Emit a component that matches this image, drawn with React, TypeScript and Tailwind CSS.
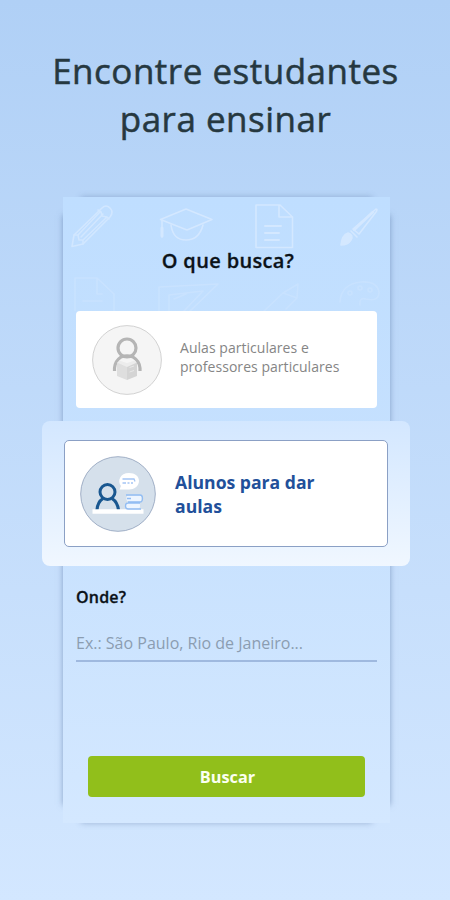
import type { ReactNode } from 'react';

function Doodles() {
  return (
    <svg
      className="absolute top-0 left-0 h-[114px] w-[327px]"
      viewBox="63 197 327 114"
      fill="none"
      stroke="#d8eaff"
      strokeWidth="1.6"
      strokeLinecap="round"
      strokeLinejoin="round"
    >
      {/* pencil */}
      <g opacity="0.75">
        <path d="M72 246.500L74 235L102 208Q106 204 110 208Q114 212 110 217L83 244Z" />
        <path d="M74 235L78 235L79 240L83 240V244M78 235L100 212M83 240L107 217M98 210L101 212L102 216L107 217L109 219M81 237L103 214" />
      </g>
      {/* graduation cap */}
      <g opacity="0.85">
        <path d="M160.500 219.500L186 209L212 219.500L187 230Z" />
        <path d="M171 225Q173 240 186 240Q199 240 203 225M162 220V237" />
        <path d="M162 228V236" strokeWidth="3" />
      </g>
      {/* document */}
      <g opacity="0.85">
        <path d="M256 205H280L292.500 217V247.500H256ZM279 205V217H292" />
        <path d="M265 226H281M265 233H279M265 240H279" strokeWidth="2" />
      </g>
      {/* brush */}
      <g opacity="0.85">
        <path d="M353 229L376 209Q378 209 376 212L359 234Z" />
        <path d="M354 230L373 212" strokeWidth="2.500" />
        <path d="M341 245Q342 235 348 233Q354 235 351 240Q348 245 341 245Z" fill="#d8eaff" />
        <path d="M351 231L357 237" />
      </g>
      <g opacity="0.35">
        <path d="M75 311V278H97L114 294V311M97 278V294H102M83 301H102" />
        <path d="M159 311V287L218 284L190 311M169 311V295L203 291L184 311M174 299L186 294" />
      </g>
      <g opacity="0.3">
        <path d="M264 311L283 293L298 284L297 298L286 309M283 293L297 298" />
        <path d="M340 302Q341 284 361 282Q377 281 379 292Q379 302 366 299Q359 297 360 305" />
        <circle cx="350" cy="293" r="2" />
        <circle cx="360" cy="288" r="2" />
        <circle cx="370" cy="290" r="2" />
      </g>
    </svg>
  );
}

function ReaderIcon() {
  return (
    <svg className="h-[70px] w-[70px] shrink-0" viewBox="0 0 70 70" fill="none">
      <circle cx="35" cy="35" r="34.400" fill="#f5f5f5" stroke="#d2d2d2" />
      <circle cx="35" cy="23" r="9" stroke="#b5b5b5" strokeWidth="3.200" />
      <path
        d="M22.500 46V43Q23 36 29 32Q35 29.500 41 32Q47.500 36 48 43V46"
        stroke="#b5b5b5"
        strokeWidth="3.200"
      />
      <path d="M25 37L35 41V55L25 51Z" fill="#dedede" />
      <path d="M45 37L35 41V55L45 51Z" fill="#d4d4d4" />
      <path d="M27 35.500L35 38L43 35.500L44 38L35 42L26 38Z" fill="#ececec" />
      <path d="M37.500 42.500L42 41M37.500 47L42 45.500" stroke="#e8e8e8" />
    </svg>
  );
}

function TutorIcon() {
  return (
    <svg className="h-[76px] w-[76px] shrink-0" viewBox="0 0 76 76" fill="none">
      <circle cx="38" cy="38" r="37.300" fill="#d5e0eb" stroke="#a0afc6" />
      <circle cx="27.500" cy="36" r="7.500" stroke="#195790" strokeWidth="3" />
      <path
        d="M17 54Q17.500 46 23 42.500M38.500 54Q37.500 46 32 42.500"
        stroke="#195790"
        strokeWidth="3.200"
      />
      <path d="M12.500 55.500H63.500" stroke="#fff" strokeWidth="4.400" />
      <path
        d="M49 17C55 17 59 20 59 25C59 30 54 33.500 49 33.500H39.500L41 30C37 25 40 17 49 17Z"
        fill="#fff"
      />
      <path d="M42.500 23H54L55 25.500M42.500 27H46M47.500 27H49.500M51 27H53" stroke="#a4c5f5" strokeWidth="1.300" />
      <rect x="46.500" y="39.500" width="15" height="6" rx="2" fill="#edf5ff" />
      <rect x="46" y="46.500" width="14" height="6" rx="2" fill="#edf5ff" />
      <path
        d="M46 39H60Q62.500 39 62.500 42.500Q62.500 46 60 46H48M60 47H48Q45.500 47 45.500 50Q45.500 53 48 53H61M47 42.500H51"
        stroke="#92bdf3"
        strokeWidth="1.300"
      />
    </svg>
  );
}

interface OptionProps {
  icon: ReactNode;
  children: ReactNode;
  className: string;
}

function Option({ icon, children, className }: OptionProps) {
  return (
    <button className={`flex items-center text-left ${className}`}>
      {icon}
      {children}
    </button>
  );
}

export default function App() {
  return (
    <div className="h-[900px] w-[450px] overflow-hidden bg-linear-to-b from-[#b0d0f6] to-[#d3e7ff] font-['Open_Sans','Noto_Sans',sans-serif]">
      <h1 className="pt-[47px] pl-px text-center text-[35px] leading-[48px] tracking-[0.5px] text-[#263840] [-webkit-text-stroke:0.5px_#263840]">
        Encontre estudantes
        <br />
        para ensinar
      </h1>

      <div className="relative isolate mt-[54px] ml-[63px] h-[626px] w-[327px]">
        {/* edge shadows fade out before reaching the corners */}
        <div className="absolute inset-x-0 inset-y-[18px] -z-10 shadow-[0_0_6px_rgba(90,120,165,0.6)]" />
        <div className="absolute inset-x-[18px] inset-y-0 -z-10 shadow-[0_0_6px_rgba(90,120,165,0.45)]" />

        <div className="flex h-full flex-col bg-linear-to-b from-[#bfdeff] via-[#c7e1fe] to-[#d4e8ff]">
          <Doodles />
          <h2 className="relative mt-[50px] pl-[3px] text-center text-[20px] leading-7 font-semibold tracking-[0.35px] text-[#0b1218] [-webkit-text-stroke:0.3px_#0b1218]">
            O que busca?
          </h2>

          <Option
            icon={<ReaderIcon />}
            className="relative mx-[13px] mt-9 h-[97px] gap-[18px] rounded bg-white pl-4"
          >
            <span className="pb-1.5 text-[14px] leading-[19px] tracking-[0.04px] text-[#858585]">
              Aulas particulares e
              <br />
              professores particulares
            </span>
          </Option>

          <div className="relative mt-[13px] -mr-5 -ml-[21px] rounded-lg bg-linear-to-b from-[#d3e7ff] to-[#f0f7ff] px-[22px] py-[19px]">
            <Option
              icon={<TutorIcon />}
              className="h-[107px] w-full gap-[19px] rounded-[5px] border border-[#8ba0c5] bg-white pl-[15px]"
            >
              <span className="text-[17.6px] leading-6 font-bold text-[#22509a]">
                Alunos para dar
                <br />
                aulas
              </span>
            </Option>
          </div>

          <div className="mx-[13px] mt-[21px] flex flex-col">
            <label className="text-[16px] leading-5 font-semibold tracking-[0.2px] text-[#0b1218] [-webkit-text-stroke:0.3px_#0b1218]">
              Onde?
            </label>
            <div className="mt-[24px] border-b-2 border-[#9fb9df] pb-[5px] text-[16px] leading-6 text-[#8b9db1]">
              Ex.: São Paulo, Rio de Janeiro...
            </div>
          </div>

          <button className="mx-[25px] mt-auto mb-[26px] h-[41px] rounded bg-[#91bf1b] pt-0.5 pl-0.5 text-[16.300px] font-bold text-[#fbfff0]">
            Buscar
          </button>
        </div>
      </div>
    </div>
  );
}
